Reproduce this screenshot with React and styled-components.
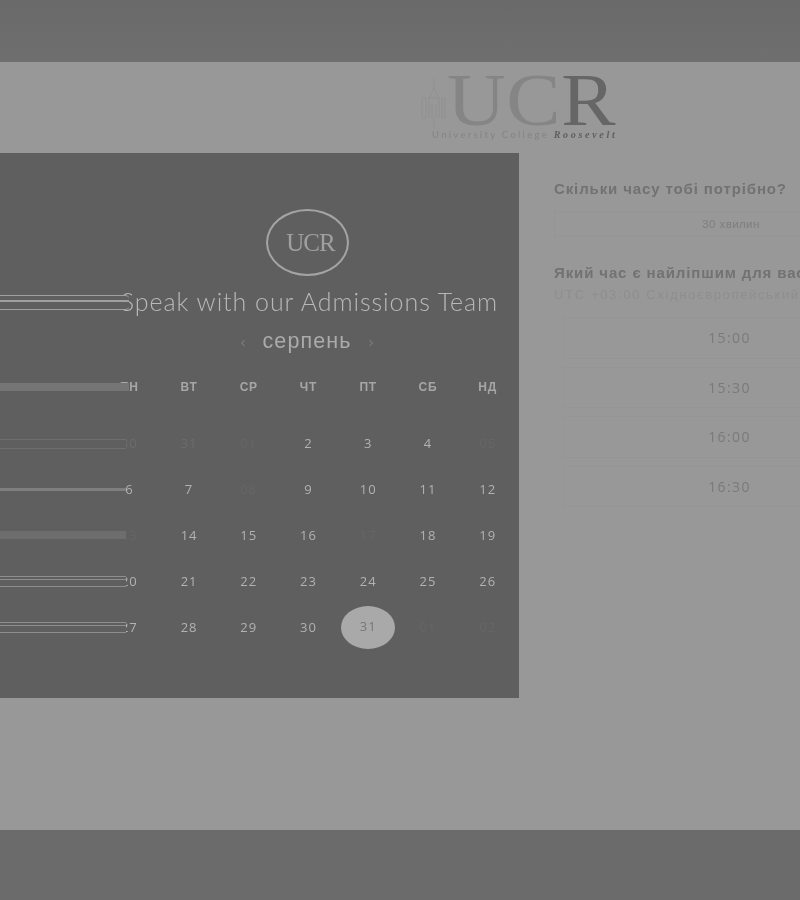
import React from 'react'
import styled, { createGlobalStyle } from 'styled-components'

const Global = createGlobalStyle`
  html, body {
    margin: 0;
    padding: 0;
    width: 800px;
    height: 900px;
    overflow: hidden;
    background: #6b6b6b;
    font-family: "Liberation Sans", Arial, sans-serif;
  }
`

const weekdays = ['ПН', 'ВТ', 'СР', 'ЧТ', 'ПТ', 'СБ', 'НД']

const weeks = [
  { smear: 'faint', days: [['30', 1], ['31', 1], ['01', 2], ['2'], ['3'], ['4'], ['05', 2]] },
  { smear: 'thin', days: [['6'], ['7'], ['08', 2], ['9'], ['10'], ['11'], ['12']] },
  { smear: 'block', days: [['13', 2], ['14'], ['15'], ['16'], ['17', 2], ['18'], ['19']] },
  { smear: 'lines', days: [['20'], ['21'], ['22'], ['23'], ['24'], ['25'], ['26']] },
  { smear: 'lines', days: [['27'], ['28'], ['29'], ['30'], ['31', 0, true], ['01', 2], ['02', 2]] },
]

const slots = ['15:00', '15:30', '16:00', '16:30']

const Page = styled.div`
  width: 800px;
  height: 900px;
  display: flex;
  flex-direction: column;
  overflow: hidden;
  filter: blur(0.6px);
`

const TopBand = styled.div`
  height: 62px;
  flex: none;
  background: linear-gradient(#6a6a6a, #6f6f6f);
`

const BottomBand = styled.div`
  height: 70px;
  flex: none;
  background: #6b6b6b;
`

const Main = styled.main`
  height: 768px;
  flex: none;
  background: #989898;
  display: flex;
  flex-direction: column;
`

const Header = styled.header`
  height: 91px;
  flex: none;
  box-sizing: border-box;
  padding: 14px 0 0 421px;
`

const Logo = styled.div`
  display: flex;
  flex-direction: column;
  width: 200px;
`

const LogoMark = styled.div`
  display: flex;
  align-items: flex-start;
  gap: 1px;
  height: 53px;
`

const TowerWrap = styled.div`
  flex: none;
  margin-top: 2px;
  height: 50px;
`

const LogoLetters = styled.div`
  font-family: "Liberation Serif", serif;
  font-size: 74px;
  line-height: 48px;
  letter-spacing: 0.5px;
  color: #858585;
  white-space: nowrap;
  transform: scaleX(1.1);
  transform-origin: left center;

  b {
    font-weight: 400;
    color: #666;
    letter-spacing: 0;
  }
`

const LogoCaption = styled.div`
  margin-left: 11px;
  font-family: Lato, sans-serif;
  font-size: 9.5px;
  line-height: 12px;
  letter-spacing: 2.3px;
  color: #848484;
  white-space: nowrap;

  i {
    font-family: "Liberation Serif", serif;
    font-weight: 700;
    color: #5f5f5f;
    font-size: 10px;
    letter-spacing: 2.7px;
  }
`

const Content = styled.div`
  display: flex;
  align-items: flex-start;
  gap: 35px;
`

const Panel = styled.section`
  width: 519px;
  height: 545px;
  flex: none;
  box-sizing: border-box;
  background: #5f5f5f;
  padding: 56px 0 0 95px;
  display: flex;
  flex-direction: column;
  align-items: center;
  overflow: hidden;
`

const Seal = styled.div`
  width: 83px;
  height: 67px;
  flex: none;
  box-sizing: border-box;
  border: 2.5px solid #a4a4a4;
  border-radius: 50%;
  padding-left: 7px;
  display: flex;
  align-items: center;
  justify-content: center;
  font-family: "Liberation Serif", serif;
  font-size: 25px;
  letter-spacing: -1px;
  color: #a0a0a0;
`

const TitleRow = styled.div`
  position: relative;
  width: 424px;
  margin-top: 11px;
  height: 28px;
  display: flex;
  justify-content: flex-end;
  padding-right: 21px;
  box-sizing: border-box;
`

const Title = styled.h1`
  margin: 0;
  font-family: Lato, sans-serif;
  font-weight: 300;
  font-size: 25px;
  line-height: 28px;
  letter-spacing: 0.93px;
  color: #b8b8b8;
  white-space: nowrap;
`

const TitleSmear = styled.div`
  position: absolute;
  left: -95px;
  top: 8px;
  width: 129px;
  height: 15px;
  box-sizing: border-box;
  background: #5f5f5f;
  border-top: 1.5px solid #a0a0a0;
  border-bottom: 1.5px solid #a0a0a0;
  border-radius: 0 4px 4px 0;

  &::after {
    content: '';
    position: absolute;
    left: 0;
    right: 0;
    top: 4px;
    height: 2px;
    background: #a0a0a0;
  }
`

const MonthRow = styled.div`
  display: flex;
  align-items: center;
  gap: 17px;
  margin-top: 14px;
  height: 24px;
`

const Month = styled.div`
  font-size: 21.5px;
  letter-spacing: 1.1px;
  color: #ababab;
`

const Arrow = styled.span`
  font-size: 15px;
  color: #7d7d7d;
`

const Calendar = styled.div`
  width: 418px;
  margin-left: 3px;
  margin-top: 25px;
`

const WeekGrid = styled.div`
  display: grid;
  grid-template-columns: repeat(7, 1fr);
`

const DaysBlock = styled.div`
  margin-top: 19px;
  padding-top: 5px;
`

const DayRow = styled(WeekGrid)`
  height: 46px;
  align-items: center;
  justify-items: center;
`

const Weekday = styled.div`
  position: relative;
  height: 18px;
  text-align: center;
  font-size: 12px;
  line-height: 18px;
  font-weight: 700;
  letter-spacing: 0.8px;
  color: #a6a6a6;
`

const Day = styled.div`
  position: relative;
  width: 100%;
  text-align: center;
  font-family: "Open Sans", sans-serif;
  font-size: 13px;
  line-height: 18px;
  letter-spacing: 1px;
  color: ${p => (p.$level === 2 ? '#666' : p.$level === 1 ? '#6c6c6c' : '#b2b2b2')};
`

const Selected = styled.span`
  display: flex;
  align-items: center;
  justify-content: center;
  width: 54px;
  height: 43px;
  margin: 0 auto;
  border-radius: 50%;
  background: #a9a9a9;
  color: #777;
  padding-bottom: 3px;
  box-sizing: border-box;
`

const smearStyles = {
  block: 'top: 5px; height: 8px; background: #6d6d6d; right: 33px;',
  head: 'top: 5px; height: 8px; background: #757575; right: 30px;',
  thin: 'top: 8px; height: 3px; background: #7f7f7f; right: 33px;',
  faint: 'top: 5px; height: 8px; background: #5f5f5f; border-top: 1px solid #6e6e6e; border-bottom: 1px solid #6e6e6e; right: 33px;',
  lines: 'top: 4px; height: 9px; background: #5f5f5f; border-top: 1.5px solid #8e8e8e; border-bottom: 1.5px solid #8e8e8e; right: 33px;',
}

const Smear = styled.div`
  position: absolute;
  left: -100px;
  ${p => smearStyles[p.$kind]}

  ${p => p.$kind === 'lines' && `
    &::after {
      content: '';
      position: absolute;
      left: 0;
      right: 0;
      top: 2px;
      height: 1px;
      background: #8e8e8e;
    }
  `}
`

const Side = styled.aside`
  width: 354px;
  flex: none;
  padding-top: 27px;
`

const Question = styled.h2`
  margin: 0;
  font-size: 15px;
  line-height: 18px;
  letter-spacing: 0.88px;
  font-weight: 700;
  color: #727272;
  white-space: nowrap;
`

const Duration = styled.div`
  margin-top: 13px;
  height: 26px;
  box-sizing: border-box;
  border: 1px solid #959595;
  display: flex;
  align-items: center;
  justify-content: center;
  font-size: 11.5px;
  letter-spacing: 0.4px;
  color: #7e7e7e;
`

const SecondQuestion = styled(Question)`
  margin-top: 27px;
`

const Zone = styled.div`
  margin-top: 5px;
  font-size: 13px;
  line-height: 16px;
  letter-spacing: 1.65px;
  color: #8e8e8e;
  white-space: nowrap;
`

const SlotList = styled.div`
  margin: 14px 0 0 9px;
  display: flex;
  flex-direction: column;
  gap: 8px;
`

const Slot = styled.div`
  height: 41.6px;
  box-sizing: border-box;
  border: 1px solid #959595;
  display: flex;
  align-items: center;
  justify-content: center;
  font-family: "Open Sans", sans-serif;
  font-size: 14px;
  letter-spacing: 1.4px;
  color: #7a7a7a;
  padding-right: 12px;
`

function Tower() {
  return (
    <svg width="25" height="50" viewBox="0 0 25 50" fill="none" stroke="#8c8c8c" strokeWidth="0.7">
      <path d="M13 0v10M8 20l5-10 5 10M8 20h10M8 20v20M18 20v20M1 20v20h4V20zM21 20v20h3V20zM11 26v14M15 26v14M13 40v10" />
    </svg>
  )
}

export default function App() {
  return (
    <>
      <Global />
      <Page>
        <TopBand />
        <Main>
          <Header>
            <Logo>
              <LogoMark>
                <TowerWrap><Tower /></TowerWrap>
                <LogoLetters>UC<b>R</b></LogoLetters>
              </LogoMark>
              <LogoCaption>University College <i>Roosevelt</i></LogoCaption>
            </Logo>
          </Header>
          <Content>
            <Panel>
              <Seal>UCR</Seal>
              <TitleRow>
                <Title>Speak with our Admissions Team</Title>
                <TitleSmear />
              </TitleRow>
              <MonthRow>
                <Arrow>‹</Arrow>
                <Month>серпень</Month>
                <Arrow>›</Arrow>
              </MonthRow>
              <Calendar>
                <WeekGrid>
                  {weekdays.map((d, i) => (
                    <Weekday key={d}>
                      {d}
                      {i === 0 && <Smear $kind="head" />}
                    </Weekday>
                  ))}
                </WeekGrid>
                <DaysBlock>
                  {weeks.map((week, r) => (
                    <DayRow key={r}>
                      {week.days.map(([label, level, selected], i) => (
                        <Day key={i} $level={selected ? 0 : level}>
                          {selected ? <Selected>{label}</Selected> : label}
                          {i === 0 && <Smear $kind={week.smear} />}
                        </Day>
                      ))}
                    </DayRow>
                  ))}
                </DaysBlock>
              </Calendar>
            </Panel>
            <Side>
              <Question>Скільки часу тобі потрібно?</Question>
              <Duration>30 хвилин</Duration>
              <SecondQuestion>Який час є найліпшим для вас?</SecondQuestion>
              <Zone>UTC +03:00 Східноєвропейський час</Zone>
              <SlotList>
                {slots.map(s => <Slot key={s}>{s}</Slot>)}
              </SlotList>
            </Side>
          </Content>
        </Main>
        <BottomBand />
      </Page>
    </>
  )
}
